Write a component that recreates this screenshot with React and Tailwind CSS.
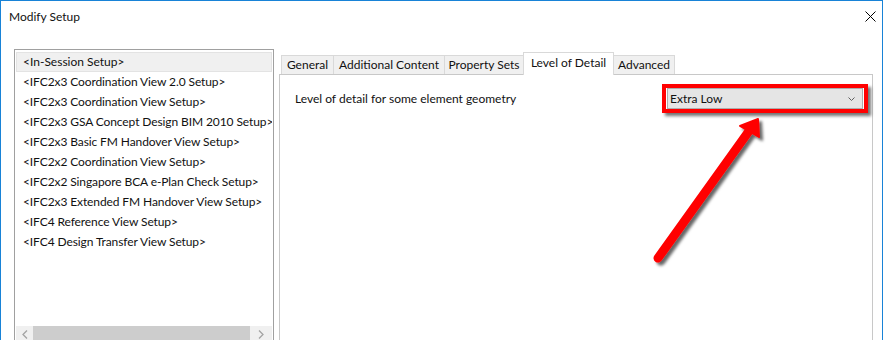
import React from "react";

const setups = [
  "<In-Session Setup>",
  "<IFC2x3 Coordination View 2.0 Setup>",
  "<IFC2x3 Coordination View Setup>",
  "<IFC2x3 GSA Concept Design BIM 2010 Setup>",
  "<IFC2x3 Basic FM Handover View Setup>",
  "<IFC2x2 Coordination View Setup>",
  "<IFC2x2 Singapore BCA e-Plan Check Setup>",
  "<IFC2x3 Extended FM Handover View Setup>",
  "<IFC4 Reference View Setup>",
  "<IFC4 Design Transfer View Setup>",
];

const tabs = [
  { label: "General", w: "w-[53px]" },
  { label: "Additional Content", w: "w-[112px]" },
  { label: "Property Sets", w: "w-[80px]" },
  { label: "Level of Detail", w: "w-[91px]", active: true },
  { label: "Advanced", w: "w-[62px]" },
];

const SetupList = () => (
  <div className="w-[260px] h-[296px] shrink-0 border border-[#a0a0a0] p-[1px] flex flex-col">
    <div className="flex-1 pt-[1px] overflow-hidden">
      {setups.map((s, i) => (
        <div
          key={s}
          className={
            i === 0
              ? "h-[20px] flex items-center pl-[6px] bg-[#f0f0f0] border border-[#e3e3e3] whitespace-nowrap"
              : "h-[20px] flex items-center pl-[7px] whitespace-nowrap tracking-[-0.1px]"
          }
        >
          {s}
        </div>
      ))}
    </div>
    <div className="h-[17px] flex bg-[#f0f0f0]">
      <div className="w-[17px] flex items-center justify-center">
        <svg width="6" height="9" viewBox="0 0 6 9">
          <path d="M5 0.5 L1 4.5 L5 8.5" fill="none" stroke="#a3a3a3" strokeWidth="1.3" />
        </svg>
      </div>
      <div className="w-[217px] bg-[#cdcdcd]" />
      <div className="flex-1 flex items-center justify-center">
        <svg width="6" height="9" viewBox="0 0 6 9">
          <path d="M1 0.5 L5 4.5 L1 8.5" fill="none" stroke="#a3a3a3" strokeWidth="1.3" />
        </svg>
      </div>
    </div>
  </div>
);

const TabPanel = () => (
  <div className="ml-[5px] w-[594px] shrink-0 flex flex-col pt-[3px]">
    <div className="h-[22px] flex items-end pl-[2px]">
      {tabs.map((t) =>
        t.active ? (
          <div
            key={t.label}
            className={`${t.w} h-[23px] -mb-[1px] -ml-[1px] relative z-10 bg-white border border-b-0 border-[#d9d9d9] flex items-center justify-center pb-[2px] whitespace-nowrap`}
          >
            {t.label}
          </div>
        ) : (
          <div
            key={t.label}
            className={`${t.w} h-[19px] bg-[#f0f0f0] border border-b-0 border-[#d9d9d9] -ml-[1px] first:ml-0 flex items-center justify-center whitespace-nowrap`}
          >
            {t.label}
          </div>
        )
      )}
    </div>
    <div className="h-[300px] border border-[#c8c8c8] flex items-start justify-between pl-[15px] pr-[9px] pt-[13px]">
      <div className="h-[21px] flex items-center">Level of detail for some element geometry</div>
      <div className="relative">
        <div className="w-[196px] h-[21px] bg-[#e5e5e5] border border-[#adadad] flex items-center justify-between pl-[2px] pr-[7px]">
          <span>Extra Low</span>
          <svg width="7" height="4" viewBox="0 0 7 4">
            <path d="M0.5 0.5 L3.5 3.5 L6.5 0.5" fill="none" stroke="#606060" strokeWidth="1" />
          </svg>
        </div>
        <div className="absolute -left-[5px] -right-[5px] -top-[4px] -bottom-[4px] border-4 border-[#ff0000] shadow-[3px_3px_3px_rgba(0,0,0,0.55)]" />
      </div>
    </div>
  </div>
);

export default function App() {
  return (
    <div
      className="relative w-[887px] h-[340px] overflow-hidden bg-white text-[12px] text-[#111]"
      style={{ fontFamily: 'Lato, "Segoe UI", sans-serif' }}
    >
      <div className="w-[883px] border-l border-t border-r border-[#1883d7] flex flex-col">
        <div className="h-[31px] shrink-0 flex items-center justify-between pl-[8px] pr-[6px]">
          <span>Modify Setup</span>
          <svg width="11" height="11" viewBox="0 0 11 11">
            <path d="M0.5 0.5 L10.5 10.5 M10.5 0.5 L0.5 10.5" stroke="#000" strokeWidth="1" />
          </svg>
        </div>
        <div className="flex pl-[13px] pt-[17px]">
          <SetupList />
          <TabPanel />
        </div>
      </div>
      <svg className="absolute left-0 top-0 pointer-events-none" width="887" height="340">
        <defs>
          <filter id="sh" x="-20%" y="-20%" width="140%" height="140%">
            <feDropShadow dx="3" dy="3" stdDeviation="1.6" floodColor="#000" floodOpacity="0.6" />
          </filter>
        </defs>
        <g filter="url(#sh)">
          <line x1="658" y1="258" x2="749" y2="131" stroke="#ff0000" strokeWidth="9" strokeLinecap="round" />
          <path d="M758 119 L740 126 L759 137 Z" fill="#ff0000" stroke="#ff0000" strokeWidth="2" strokeLinejoin="round" />
        </g>
      </svg>
    </div>
  );
}
